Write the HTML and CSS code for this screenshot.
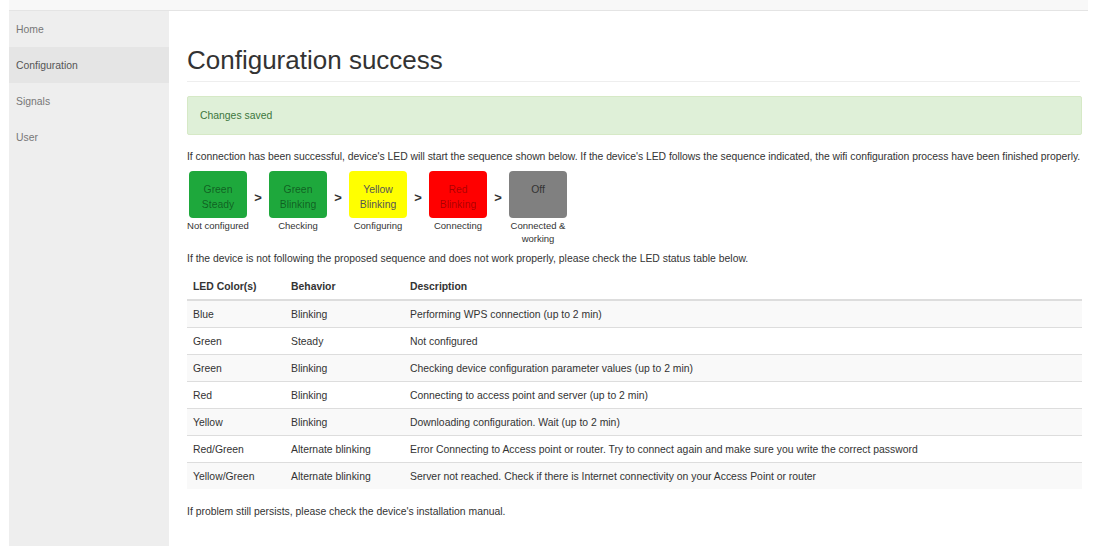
FILE: index.html
```html
<!DOCTYPE html>
<html lang="en">

<head>
    <meta charset="UTF-8">
    <title>Configuration success</title>
    <link rel="stylesheet" href="styles.css">
</head>

<body>
    <div class="page">
        <div class="topbar"></div>
        <div class="layout">
            <ul class="sidebar">
                <li><a href="#">Home</a></li>
                <li class="active"><a href="#">Configuration</a></li>
                <li><a href="#">Signals</a></li>
                <li><a href="#">User</a></li>
            </ul>

            <div class="main">
                <h1 class="page-header">Configuration success</h1>
                <div class="alert-success">Changes saved</div>

                <p class="intro">If connection has been successful, device's LED will start the sequence shown below. If the device's LED follows the sequence indicated, the wifi configuration process have been finished properly.</p>

                <div class="sequence">
                    <div class="step">
                        <div class="led led-green">Green<br>Steady</div>
                        <span class="step-label">Not configured</span>
                    </div>
                    <span class="arrow">&gt;</span>
                    <div class="step">
                        <div class="led led-green">Green<br>Blinking</div>
                        <span class="step-label">Checking</span>
                    </div>
                    <span class="arrow">&gt;</span>
                    <div class="step">
                        <div class="led led-yellow">Yellow<br>Blinking</div>
                        <span class="step-label">Configuring</span>
                    </div>
                    <span class="arrow">&gt;</span>
                    <div class="step">
                        <div class="led led-red">Red<br>Blinking</div>
                        <span class="step-label">Connecting</span>
                    </div>
                    <span class="arrow">&gt;</span>
                    <div class="step">
                        <div class="led led-off">Off</div>
                        <span class="step-label">Connected &amp;<br>working</span>
                    </div>
                </div>

                <p class="table-note">If the device is not following the proposed sequence and does not work properly, please check the LED status table below.</p>

                <table class="led-table">
                    <thead>
                        <tr>
                            <th class="col-color">LED Color(s)</th>
                            <th class="col-behavior">Behavior</th>
                            <th>Description</th>
                        </tr>
                    </thead>
                    <tbody>
                        <tr><td>Blue</td><td>Blinking</td><td>Performing WPS connection (up to 2 min)</td></tr>
                        <tr><td>Green</td><td>Steady</td><td>Not configured</td></tr>
                        <tr><td>Green</td><td>Blinking</td><td>Checking device configuration parameter values (up to 2 min)</td></tr>
                        <tr><td>Red</td><td>Blinking</td><td>Connecting to access point and server (up to 2 min)</td></tr>
                        <tr><td>Yellow</td><td>Blinking</td><td>Downloading configuration. Wait (up to 2 min)</td></tr>
                        <tr><td>Red/Green</td><td>Alternate blinking</td><td>Error Connecting to Access point or router. Try to connect again and make sure you write the correct password</td></tr>
                        <tr><td>Yellow/Green</td><td>Alternate blinking</td><td>Server not reached. Check if there is Internet connectivity on your Access Point or router</td></tr>
                    </tbody>
                </table>

                <p class="footer-note">If problem still persists, please check the device's installation manual.</p>
            </div>
        </div>
    </div>
</body>

</html>
```

FILE: styles.css
```css
body {
    margin: 0;
    font-family: "Liberation Sans", Arial, sans-serif;
    font-size: 10.4px;
    line-height: 15px;
    color: #333;
    background-color: #fff;
}

.page {
    width: 1079px;
    margin-left: 9px;
}

.topbar {
    height: 10px;
    background-color: #f8f8f8;
    border-bottom: 1px solid #e4e4e4;
}

.layout {
    display: flex;
}

.sidebar {
    width: 160px;
    height: 535px;
    margin: 0;
    padding: 0;
    list-style: none;
    background-color: #eee;
    flex-shrink: 0;
}

.sidebar li a {
    display: block;
    padding: 11px 7px 10px;
    color: #777;
    text-decoration: none;
}

.sidebar li.active {
    background-color: #e5e5e5;
}

.sidebar li.active a {
    color: #555;
}

.main {
    width: 895px;
    padding-left: 18px;
}

.page-header {
    margin: 35px 0 14px;
    padding-bottom: 7px;
    font-size: 26px;
    font-weight: 400;
    line-height: 28px;
    color: #333;
    border-bottom: 1px solid #eee;
    width: 893px;
}

.alert-success {
    padding: 11px 12px;
    background-color: #dff0d8;
    border: 1px solid #d6e9c6;
    color: #3c763d;
    border-radius: 2px;
}

p {
    margin: 15px 0 0;
}

.intro {
    margin-top: 14px;
    white-space: nowrap;
    letter-spacing: -0.03px;
}

.sequence {
    display: flex;
    align-items: flex-start;
    margin-top: 7px;
    padding-left: 2px;
}

.step {
    display: flex;
    flex-direction: column;
    align-items: center;
    width: 58px;
}

.led {
    width: 58px;
    height: 47px;
    box-sizing: border-box;
    padding-top: 11px;
    border-radius: 4px;
    text-align: center;
    color: rgba(0, 0, 0, 0.45);
}

.led-green {
    background-color: #1ea83c;
}

.led-yellow {
    background-color: #ffff00;
    color: #555;
}

.led-red {
    background-color: #ff0000;
    color: rgba(0, 0, 0, 0.35);
}

.led-off {
    background-color: #808080;
    color: #333;
}

.step-label {
    margin-top: 1px;
    white-space: nowrap;
    text-align: center;
    font-size: 9.5px;
    line-height: 13px;
}

.arrow {
    width: 22px;
    text-align: center;
    margin-top: 19px;
    font-size: 13px;
    font-weight: bold;
}

.table-note {
    margin-top: 6px;
}

.led-table {
    width: 895px;
    margin-top: 7px;
    border-collapse: collapse;
}

.led-table th,
.led-table td {
    padding: 6px 6px 5px;
    text-align: left;
    vertical-align: top;
}

.led-table th {
    border-bottom: 2px solid #ddd;
    font-weight: bold;
}

.led-table td {
    border-top: 1px solid #ddd;
}

.led-table tbody tr:nth-child(odd) {
    background-color: #f9f9f9;
}

.col-color {
    width: 86px;
}

.col-behavior {
    width: 107px;
}

.footer-note {
    margin-top: 15px;
}
```
